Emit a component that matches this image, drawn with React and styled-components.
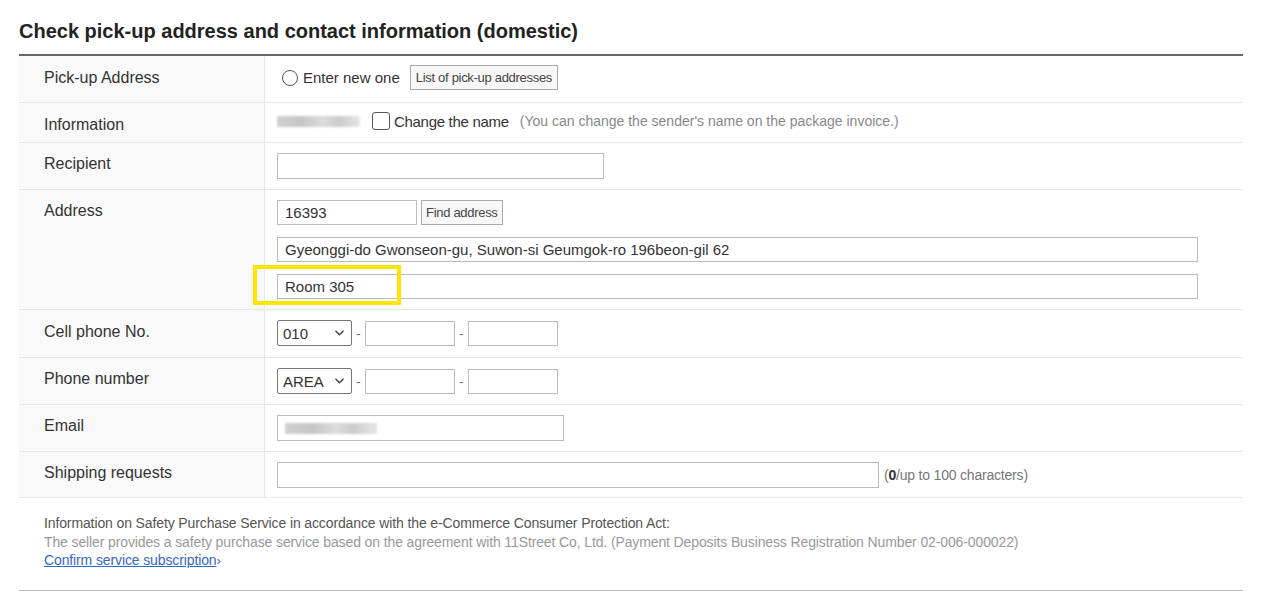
import React from 'react';
import styled, { createGlobalStyle } from 'styled-components';

const GlobalStyle = createGlobalStyle`
  body {
    margin: 0;
    background: #fff;
    font-family: "Liberation Sans", Arial, sans-serif;
    color: #333;
  }
  * { box-sizing: border-box; }
`;

const Page = styled.div`
  padding: 18px 26px 0 19px;
  width: 1269px;
`;

const Title = styled.h2`
  margin: 0 0 10px;
  font-size: 20px;
  line-height: 26px;
  font-weight: 700;
  color: #222;
`;

const Table = styled.div`
  border-top: 2px solid #666;
`;

const Row = styled.div`
  display: grid;
  grid-template-columns: 246px 1fr;
  border-bottom: 1px solid #e6e6e6;
`;

const Label = styled.div`
  background: #f9f9f9;
  border-right: 1px solid #e6e6e6;
  padding: ${p => p.$top || 11}px 0 0 25px;
  font-size: 16px;
  line-height: 20px;
  color: #333;
`;

const Cell = styled.div`
  padding: ${p => p.$pad || '10px 12px'};
  display: flex;
  flex-direction: ${p => (p.$stack ? 'column' : 'row')};
  align-items: ${p => (p.$stack ? 'stretch' : 'center')};
  gap: ${p => p.$gap || 0}px;
`;

const Line = styled.div`
  display: flex;
  align-items: center;
  position: relative;
`;

const Radio = styled.span`
  width: 16px;
  height: 16px;
  border: 1px solid #555;
  border-radius: 50%;
  margin: 0 5px 0 5px;
  background: #fff;
`;

const Check = styled.span`
  width: 18px;
  height: 18px;
  border: 1px solid #555;
  border-radius: 3px;
  margin: 0 4px 0 12px;
  background: #fff;
`;

const Text = styled.span`
  font-size: ${p => p.$size || 15}px;
  color: ${p => p.$color || '#333'};
  letter-spacing: ${p => p.$ls || 0}px;
  margin-left: ${p => p.$ml || 0}px;
  white-space: nowrap;
`;

const SmallButton = styled.button`
  height: 25px;
  padding: 0 ${p => p.$px || 5}px;
  margin-left: ${p => p.$ml || 4}px;
  border: 1px solid #aaa;
  background: #f7f7f7;
  font-family: "Liberation Sans", Arial, sans-serif;
  font-size: 13px;
  color: #444;
  letter-spacing: -0.3px;
  cursor: pointer;
`;

const Input = styled.div`
  width: ${p => (p.$w ? `${p.$w}px` : '100%')};
  height: ${p => p.$h || 25}px;
  border: 1px solid #bbb;
  background: #fff;
  padding: 0 7px;
  display: flex;
  align-items: center;
  font-size: 15px;
  color: #333;
  flex-shrink: 0;
`;

const Blur = styled.span`
  display: inline-block;
  width: ${p => p.$w}px;
  height: 11px;
  background: linear-gradient(90deg, #c9c9c9 0%, #bdbdbd 30%, #d6d6d6 55%, #c4c4c4 75%, #e3e3e3 100%);
  filter: blur(1.2px);
  opacity: 0.85;
`;

const Select = styled.div`
  width: 75px;
  height: 26px;
  border: 1px solid #777;
  border-radius: 2px;
  background: #fff;
  display: flex;
  align-items: center;
  justify-content: space-between;
  padding: 0 6px 0 5px;
  font-size: 15px;
  color: #333;
`;

const Dash = styled.span`
  width: 13px;
  text-align: center;
  font-size: 13px;
  color: #666;
`;

const Highlight = styled.div`
  position: absolute;
  left: -24px;
  top: -9px;
  width: 148px;
  height: 40px;
  border: 4px solid #ffe600;
  pointer-events: none;
`;

const Footer = styled.div`
  padding: 16px 0 19px 25px;
  border-bottom: 1px solid #bbb;
  font-size: 14px;
  line-height: 18.5px;
  letter-spacing: -0.12px;
`;

const FootLine = styled.div`
  color: ${p => p.$color};
`;

const FootLink = styled.a`
  color: #3469c4;
  text-decoration: underline;
  cursor: pointer;
`;

const Chevron = () => (
  <svg width="11" height="8" viewBox="0 0 11 8" fill="none">
    <path d="M1.5 1.8 L5.5 5.8 L9.5 1.8" stroke="#444" strokeWidth="1.5" />
  </svg>
);

const PhoneFields = ({ code }) => (
  <>
    <Select>
      <span>{code}</span>
      <Chevron />
    </Select>
    <Dash>-</Dash>
    <Input $w={90} />
    <Dash>-</Dash>
    <Input $w={90} />
  </>
);

export default function App() {
  return (
    <Page>
      <GlobalStyle />
      <Title>Check pick-up address and contact information (domestic)</Title>
      <Table>
        <Row>
          <Label $top={12}>Pick-up Address</Label>
          <Cell $pad="9px 12px 12px">
            <Radio />
            <Text>Enter new one</Text>
            <SmallButton $ml={10}>List of pick-up addresses</SmallButton>
          </Cell>
        </Row>
        <Row>
          <Label $top={12}>Information</Label>
          <Cell $pad="9px 12px 12px 12px">
            <Blur $w={83} />
            <Check />
            <Text $ls={-0.3}>Change the name</Text>
            <Text $size={14} $color="#888" $ml={11}>
              (You can change the sender's name on the package invoice.)
            </Text>
          </Cell>
        </Row>
        <Row>
          <Label $top={11}>Recipient</Label>
          <Cell>
            <Input $w={327} $h={26} />
          </Cell>
        </Row>
        <Row>
          <Label $top={11}>Address</Label>
          <Cell $stack $gap={12} $pad="10px 45px 10px 12px">
            <Line>
              <Input $w={140}>16393</Input>
              <SmallButton $px={4}>Find address</SmallButton>
            </Line>
            <Line>
              <Input>Gyeonggi-do Gwonseon-gu, Suwon-si Geumgok-ro 196beon-gil 62</Input>
            </Line>
            <Line>
              <Input>Room 305</Input>
              <Highlight />
            </Line>
          </Cell>
        </Row>
        <Row>
          <Label $top={12}>Cell phone No.</Label>
          <Cell $pad="10px 12px 11px">
            <PhoneFields code="010" />
          </Cell>
        </Row>
        <Row>
          <Label $top={11}>Phone number</Label>
          <Cell>
            <PhoneFields code="AREA" />
          </Cell>
        </Row>
        <Row>
          <Label $top={11}>Email</Label>
          <Cell>
            <Input $w={287} $h={26}>
              <Blur $w={92} />
            </Input>
          </Cell>
        </Row>
        <Row>
          <Label $top={11}>Shipping requests</Label>
          <Cell $pad="10px 12px 9px">
            <Input $w={602} $h={26} />
            <Text $size={14} $color="#777" $ml={5} $ls={-0.2}>
              (<b style={{ color: '#333' }}>0</b>/up to 100 characters)
            </Text>
          </Cell>
        </Row>
      </Table>
      <Footer>
        <FootLine $color="#555">
          Information on Safety Purchase Service in accordance with the e-Commerce Consumer Protection Act:
        </FootLine>
        <FootLine $color="#999">
          The seller provides a safety purchase service based on the agreement with 11Street Co, Ltd. (Payment Deposits Business Registration Number 02-006-000022)
        </FootLine>
        <FootLink>Confirm service subscription</FootLink>
        <Text $size={13} $color="#3469c4">›</Text>
      </Footer>
    </Page>
  );
}
